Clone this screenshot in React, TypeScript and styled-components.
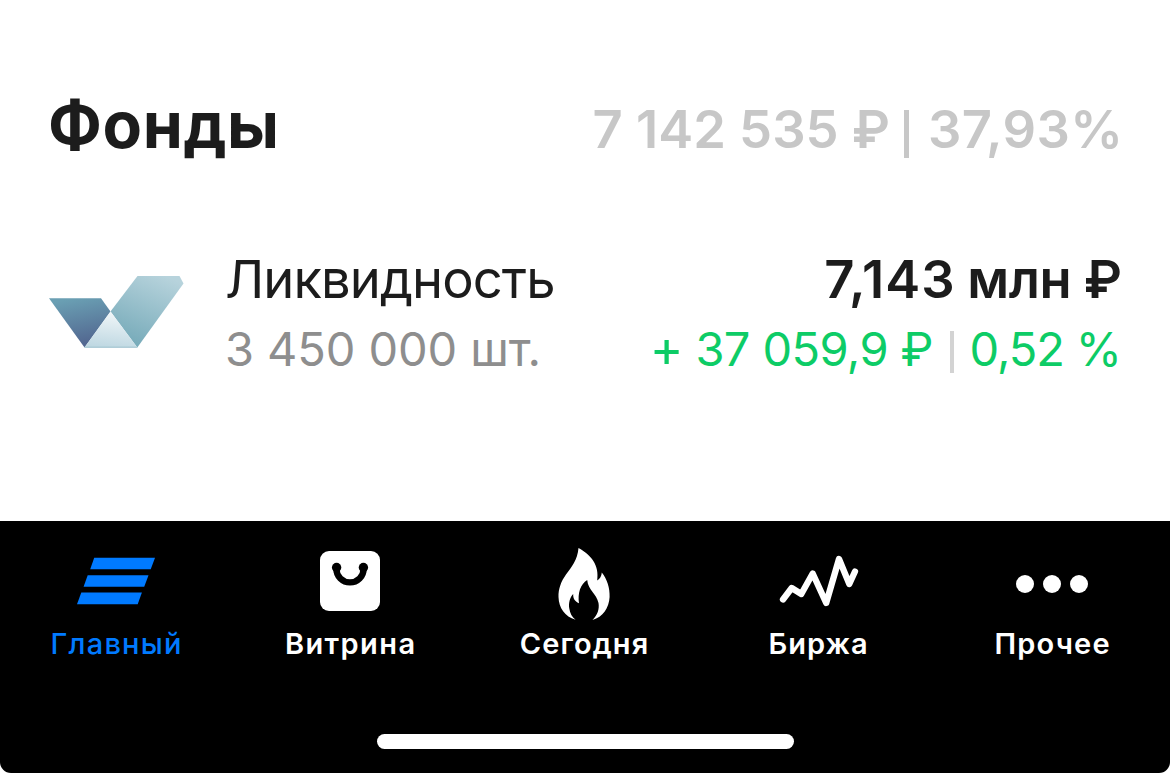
import { createGlobalStyle, styled } from 'styled-components';
import React from 'react';

const GlobalStyle = createGlobalStyle`
  * {
    box-sizing: border-box;
  }
  body {
    margin: 0;
    background: #fff;
    font-family: Inter, "Noto Sans", sans-serif;
  }
`;

const Screen = styled.div`
  display: flex;
  flex-direction: column;
  width: 1170px;
  height: 773px;
  overflow: hidden;
`;

const Content = styled.main`
  flex: 1;
  padding: 87px 48px 0 49px;
`;

const Title = styled.h1`
  margin: 0 0 0 -1px;
  font-size: 64.5px;
  line-height: 77px;
  font-weight: 700;
  letter-spacing: 0.6px;
  color: #1c1c1c;
`;

const Text = styled.div<{ $small?: boolean; $weight?: number; $color?: string; $spacing?: number }>`
  display: flex;
  font-size: ${(props) => (props.$small ? 47 : 52.5)}px;
  line-height: 70px;
  font-weight: ${(props) => props.$weight || 400};
  color: ${(props) => props.$color || '#1c1c1c'};
  letter-spacing: ${(props) => props.$spacing || 0}px;
  white-space: pre;
`;

const Part = styled.span<{ $spacing: number }>`
  letter-spacing: ${(props) => props.$spacing}px;
  margin-right: ${(props) => -props.$spacing}px;
`;

const Header = styled.header`
  display: flex;
  justify-content: space-between;
  align-items: flex-end;
  height: 77px;
  margin-right: -1px;
`;

const Fund = styled.section`
  display: flex;
  align-items: flex-start;
  margin-top: 80px;
`;

const Logo = styled.svg`
  width: 135px;
  height: 74px;
  margin: 31px 41px 0 0;
`;

const Lines = styled.div<{ $align?: string }>`
  display: flex;
  flex-direction: column;
  align-items: ${(props) => props.$align || 'flex-start'};
  flex: 1;
`;

const Divider = styled.span<{ $width: number; $height: number; $margin: string }>`
  width: ${(props) => props.$width}px;
  height: ${(props) => props.$height}px;
  margin: ${(props) => props.$margin};
  background: ${(props) => (props.$width > 4 ? '#c7c7c7' : '#d3d3d3')};
`;

const Sign = styled.span`
  margin-right: 12px;
  font-size: 51px;
`;

const TabBar = styled.nav`
  display: flex;
  flex-direction: column;
  align-items: center;
  height: 252px;
  background: #000;
  border-radius: 0 0 11px 11px;
`;

const Tabs = styled.div`
  display: grid;
  grid-template-columns: repeat(5, 234px);
  height: 213px;
  padding-top: 22px;
`;

const Tab = styled.div<{ $active?: boolean }>`
  display: flex;
  flex-direction: column;
  align-items: center;
  padding-right: 2px;
  color: ${(props) => (props.$active ? '#007aff' : '#fff')};
  font-weight: ${(props) => (props.$active ? 500 : 600)};
`;

const Icon = styled.svg`
  width: 84px;
  height: 80px;
`;

const Label = styled.span<{ $spacing: number }>`
  font-size: 29px;
  line-height: 42px;
  letter-spacing: ${(props) => props.$spacing}px;
  margin-right: ${(props) => -props.$spacing}px;
`;

const HomeIndicator = styled.div`
  width: 417px;
  height: 15px;
  border-radius: 8px;
  background: #fff;
`;

function FundLogo() {
  return (
    <Logo viewBox="0 0 135 74">
      <defs>
        <linearGradient id="left" x1="0.4" y1="0" x2="0.65" y2="1">
          <stop offset="0" stopColor="#6a9fb3" />
          <stop offset="1" stopColor="#50628d" />
        </linearGradient>
        <linearGradient id="right" x1="0.75" y1="0" x2="0.3" y2="1">
          <stop offset="0" stopColor="#b7d3dc" />
          <stop offset="1" stopColor="#74a9b8" />
        </linearGradient>
        <linearGradient id="middle" x1="0.6" y1="0" x2="0.45" y2="1">
          <stop offset="0" stopColor="#f2f7f9" />
          <stop offset="1" stopColor="#bfd8e2" />
        </linearGradient>
      </defs>
      <path d="M0 23.3H52L61.5 36.5L35.5 72.5Z" fill="url(#left)" />
      <path d="M61.5 36.5L88.5 1H130.5L134.5 8.5L88.3 72.5Z" fill="url(#right)" />
      <path d="M61.5 36.5L88.3 72.5H35.5Z" fill="url(#middle)" />
      <path d="M35.5 72.2H88.3" stroke="#9bc0cc" />
    </Logo>
  );
}

function MainIcon() {
  return (
    <Icon viewBox="0 0 84 80" fill="currentColor">
      <path d="M20.2 14.8H81L76.7 26.2H16.2Z" />
      <path d="M13.7 32.2H74.5L70.2 43.8H9.6Z" />
      <path d="M7.3 49.6H67.9L63.7 61.2H3Z" />
    </Icon>
  );
}

function ShopIcon() {
  return (
    <Icon viewBox="0 0 84 80">
      <rect x="12" y="8" width="60" height="60" rx="9" fill="currentColor" />
      <path d="M28.4 25V26A13.6 13.4 0 0 0 55.6 26V25" fill="none" stroke="#000" strokeWidth="6.4" />
      <circle cx="28.6" cy="24.5" r="4.7" fill="#000" />
      <circle cx="55.4" cy="24.5" r="4.7" fill="#000" />
    </Icon>
  );
}

function FireIcon() {
  return (
    <Icon viewBox="0 0 84 80" fill="currentColor">
      <path d="M36.5 5C49 12 57.5 22 55.2 37.5C58 36 59.5 33 59.8 29.5C65 36 68 45 67.6 54C67 65 61 74 50.5 77C55.5 72 57.5 66 56.5 60C54.5 50.5 46 47 45.2 37C38.5 41 35.5 50 37 60.3C32.5 58 31 55.5 31.2 51C28 54 26.5 60 27.2 65C28 70.5 30 74 33.5 76.8C23 73.5 16.8 65 16.5 54C16.3 46 19 38.5 24 31.5C29.5 24 35.5 17 36.5 5Z" />
    </Icon>
  );
}

function ExchangeIcon() {
  return (
    <Icon viewBox="0 0 84 80" fill="none" stroke="currentColor" strokeWidth="6.3" strokeLinecap="round" strokeLinejoin="round">
      <path d="M7 56.5L15.7 45L25.3 51L36.7 30.5L50.2 60L63 16L73.3 41L79 28.5" />
    </Icon>
  );
}

function MoreIcon() {
  return (
    <Icon viewBox="0 0 84 80" fill="currentColor">
      <circle cx="15" cy="41" r="9" />
      <circle cx="42" cy="41" r="9" />
      <circle cx="69" cy="41" r="9" />
    </Icon>
  );
}

const tabs = [
  { label: 'Главный', icon: MainIcon, spacing: 1.2, active: true },
  { label: 'Витрина', icon: ShopIcon, spacing: 1.4 },
  { label: 'Сегодня', icon: FireIcon, spacing: 1.1 },
  { label: 'Биржа', icon: ExchangeIcon, spacing: 1 },
  { label: 'Прочее', icon: MoreIcon, spacing: 1.2 },
];

function App() {
  return (
    <Screen>
      <GlobalStyle />
      <Content>
        <Header>
          <Title>Фонды</Title>
          <Text $weight={600} $color="#c7c7c7">
            <Part $spacing={0}>7 142 535 ₽</Part>
            <Divider $width={5} $height={48} $margin="16px 19px 0 14px" />
            <Part $spacing={0.4}>37,93%</Part>
          </Text>
        </Header>
        <Fund>
          <FundLogo />
          <Lines>
            <Text $spacing={-0.9}>Ликвидность</Text>
            <Text $small $color="#8e8e8e" $spacing={-0.1}>3 450 000 шт.</Text>
          </Lines>
          <Lines $align="flex-end">
            <Text $weight={600}>
              <Part $spacing={1}>7,143</Part>
              <Part $spacing={-0.5}> млн ₽</Part>
            </Text>
            <Text $small $color="#0dcc66">
              <Sign>+</Sign>
              <Part $spacing={-0.6}>37 059,9 ₽</Part>
              <Divider $width={4} $height={42} $margin="17px 16px 0 16px" />
              <Part $spacing={-1.1}>0,52 %</Part>
            </Text>
          </Lines>
        </Fund>
      </Content>
      <TabBar>
        <Tabs>
          {tabs.map(({ label, icon: TabIcon, spacing, active }) => (
            <Tab key={label} $active={active}>
              <TabIcon />
              <Label $spacing={spacing}>{label}</Label>
            </Tab>
          ))}
        </Tabs>
        <HomeIndicator />
      </TabBar>
    </Screen>
  );
}

export default App;
